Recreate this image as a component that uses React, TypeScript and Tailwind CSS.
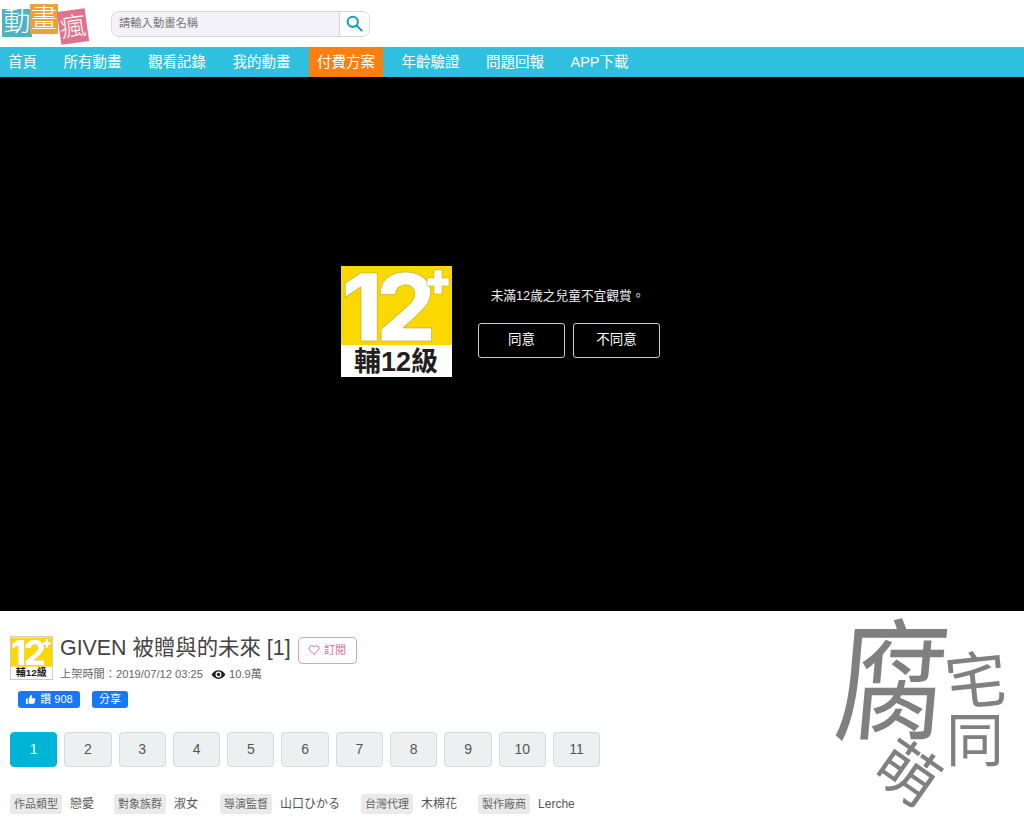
const navItems = ["首頁", "所有動畫", "觀看記錄", "我的動畫", "付費方案", "年齡驗證", "問題回報", "APP下載"];
const episodes = ["1", "2", "3", "4", "5", "6", "7", "8", "9", "10", "11"];
const tags = [
  { label: "作品類型", value: "戀愛", cls: "mr-[20px]" },
  { label: "對象族群", value: "淑女", cls: "mr-[22px]" },
  { label: "導演監督", value: "山口ひかる", cls: "mr-[21px]" },
  { label: "台灣代理", value: "木棉花", cls: "mr-[21px]" },
  { label: "製作廠商", value: "Lerche", cls: "" },
];

function RatingBadge({ className }: { className: string }) {
  return (
    <svg viewBox="0 0 111 111" className={className}>
      <rect width="111" height="111" fill="#fff" />
      <rect width="111" height="79" fill="#fbd800" />
      <g fontFamily="Inter, sans-serif" fontWeight="800" fontSize="94" fill="#fff" stroke="#b89c10" strokeWidth="0.5">
        <text x="0" y="75">1</text>
        <text x="35" y="75">2</text>
      </g>
      <path d="M93 4h8v8h7v8h-7v8h-8v-8h-7v-8h7z" fill="#fff" stroke="#b89c10" strokeWidth="0.5" />
      <text x="55" y="105" textAnchor="middle" fontFamily="'Liberation Sans', 'Noto Sans CJK TC', sans-serif" fontWeight="700" fontSize="27" fill="#231f20">
        輔12級
      </text>
    </svg>
  );
}

function LogoTile({ char, className }: { char: string; className: string }) {
  return (
    <div className={`absolute flex items-center justify-center text-white font-light leading-none ${className}`}>
      {char}
    </div>
  );
}

function Logo() {
  return (
    <div className="relative w-[90px] h-[46px] shrink-0">
      <LogoTile char="動" className="left-[2px] top-[8px] w-[30px] h-[28px] bg-[#4fb3bf] text-[27px]" />
      <LogoTile char="畫" className="left-[30px] top-[3px] w-[28px] h-[30px] bg-[#e8a33e] text-[26px]" />
      <LogoTile char="瘋" className="left-[59px] top-[9px] w-[28px] h-[33px] bg-[#e2708f] text-[26px] rotate-[-8deg]" />
    </div>
  );
}

function Watermark() {
  return (
    <div className="absolute right-0 top-[7px] w-[200px] h-[205px] text-[#808080] leading-none">
      <span className="absolute left-[12px] top-[11px] text-[112px] leading-none scale-y-[1.18] -skew-x-[6deg]">腐</span>
      <span className="absolute left-[121px] top-[33px] text-[62px] leading-none -rotate-[6deg]">宅</span>
      <span className="absolute left-[122px] top-[94px] text-[58px] leading-none">同</span>
      <span className="absolute left-[52px] top-[125px] text-[62px] leading-none rotate-[35deg]">萌</span>
    </div>
  );
}

export default function App() {
  return (
    <div className="w-[1024px] h-[827px] overflow-hidden bg-white font-['Liberation_Sans','Noto_Sans_CJK_TC',sans-serif]">
      <header className="h-[47px] flex items-center">
        <Logo />
        <div className="ml-[21px] w-[259px] h-[26px] flex rounded-[8px] border border-[#d5d5dd] overflow-hidden">
          <div className="flex-1 bg-[#f3f2f8] pl-[7px] flex items-center text-[11.3px] text-[#777]">請輸入動畫名稱</div>
          <div className="w-[30px] border-l border-[#d5d5dd] bg-white flex items-center justify-center">
            <svg viewBox="0 0 18 18" className="w-[17px] h-[17px]" fill="none" stroke="#1a9fc4" strokeWidth="2.2" strokeLinecap="round">
              <circle cx="7.200" cy="7.200" r="5.400" />
              <path d="M11.200 11.200l5.300 5.300" />
            </svg>
          </div>
        </div>
      </header>

      <nav className="h-[30px] bg-[#2fc0df] text-white text-[14.5px] leading-[30px]">
        <div className="flex gap-[10.5px]">
          {navItems.map((item) => (
            <a key={item} className={`px-2 ${item === "付費方案" ? "bg-[#ff7f0e]" : ""}`}>
              {item}
            </a>
          ))}
        </div>
      </nav>

      <section className="h-[534px] bg-black pt-[189px] pl-[341px]">
        <div className="flex items-center gap-[26px]">
          <RatingBadge className="w-[111px] h-[111px]" />
          <div className="flex flex-col items-center">
            <p className="text-[12.7px] text-[#eee] mt-[2px] mb-[17px] mr-[3px]">未滿12歲之兒童不宜觀賞。</p>
            <div className="flex gap-[8px]">
              <button className="w-[87px] h-[35px] border border-[#ccc] rounded-[3px] text-[13.5px] text-white">同意</button>
              <button className="w-[87px] h-[35px] border border-[#ccc] rounded-[3px] text-[13.5px] text-white">不同意</button>
            </div>
          </div>
        </div>
      </section>

      <section className="relative h-[216px] px-[10px] pt-[25px]">
        <Watermark />
        <div className="flex">
          <RatingBadge className="w-[43px] h-[44px] border border-[#ccc]" />
          <div className="ml-[7px]">
            <div className="flex items-center h-[28px]">
              <h1 className="text-[21.4px] text-[#444] leading-none pb-[3px]">GIVEN 被贈與的未來 [1]</h1>
              <button className="ml-[7px] w-[59px] h-[27px] border border-[#e5a0b8] rounded-[4px] text-[11px] text-[#e06a90] flex items-center justify-center gap-[4px]">
                <svg viewBox="0 0 24 24" className="w-[12px] h-[12px]" fill="none" stroke="currentColor" strokeWidth="2">
                  <path d="M12 21l-8.500-8.700a5.200 5.200 0 0 1 7.400-7.300L12 6.100l1.100-1.100a5.200 5.200 0 0 1 7.400 7.300z" />
                </svg>
                訂閱
              </button>
            </div>
            <div className="flex items-center mt-[2px] text-[11.2px] text-[#666] h-[16px]">
              <span>上架時間：2019/07/12 03:25</span>
              <svg viewBox="0 0 24 24" className="ml-[8px] mr-[3px] w-[15px] h-[15px]" fill="#222">
                <path d="M12 5C7 5 2.700 8.100 1 12c1.700 3.900 6 7 11 7s9.300-3.100 11-7c-1.700-3.900-6-7-11-7zm0 11.700a4.700 4.700 0 1 1 0-9.400 4.700 4.700 0 0 1 0 9.400zm0-7.500a2.800 2.800 0 1 0 0 5.600 2.800 2.800 0 0 0 0-5.600z" />
              </svg>
              <span>10.9萬</span>
            </div>
          </div>
        </div>

        <div className="flex gap-[12px] ml-[8px] mt-[9px] text-[11px] text-white">
          <span className="w-[62px] h-[17px] rounded-[3px] bg-[#1877f2] flex items-center justify-center gap-[4px]">
            <svg viewBox="0 0 24 24" className="w-[11px] h-[11px]" fill="#fff">
              <path d="M2 10h4v12H2zM8 21V10l5-8c1.500 0 3 1 2.500 3L15 9h6c1 0 2 1 1.700 2.200l-2 8.500c-.3 1-1 1.300-2 1.300z" />
            </svg>
            讚 908
          </span>
          <span className="w-[36px] h-[17px] rounded-[3px] bg-[#1877f2] flex items-center justify-center">分享</span>
        </div>

        <div className="flex gap-[7px] mt-[24px]">
          {episodes.map((ep) => (
            <button
              key={ep}
              className={`w-[47.300px] h-[35px] rounded-[4px] border text-[14px] ${
                ep === "1"
                  ? "bg-[#00b4d8] border-[#00b4d8] text-white"
                  : "bg-[#ecf0f1] border-[#d5dadb] text-[#555]"
              }`}
            >
              {ep}
            </button>
          ))}
        </div>

        <div className="flex items-center mt-[27px] text-[12px] text-[#555]">
          {tags.map((tag) => (
            <div key={tag.label} className={`flex items-center ${tag.cls}`}>
              <span className="h-[20px] w-[52px] text-center leading-[20px] rounded-[3px] bg-[#eaeaea] text-[11px] text-[#666]">{tag.label}</span>
              <span className="ml-[8px]">{tag.value}</span>
            </div>
          ))}
        </div>
      </section>
    </div>
  );
}
